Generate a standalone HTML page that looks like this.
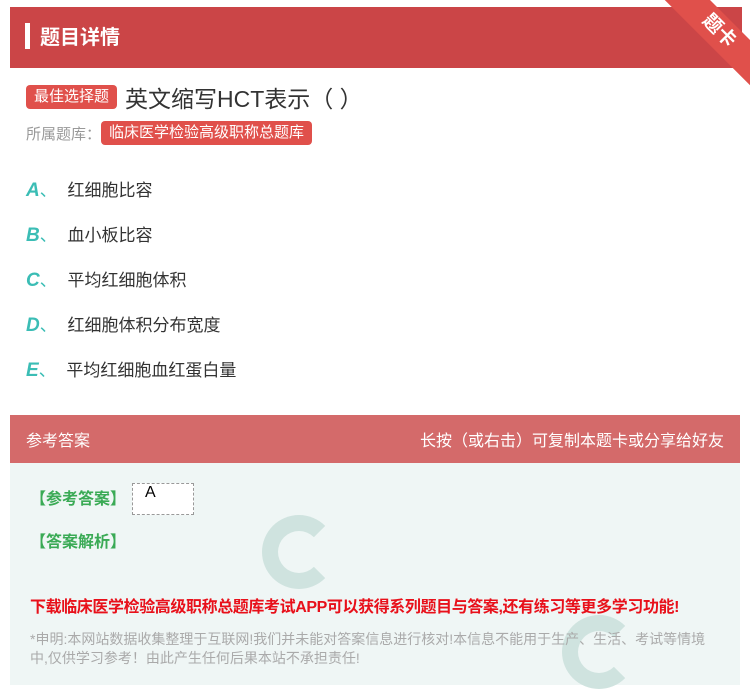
<!DOCTYPE html>
<html><head><meta charset="utf-8"><style>
*{margin:0;padding:0;box-sizing:border-box}
body{width:750px;height:685px;background:#fff;font-family:"Liberation Sans","Noto Sans CJK SC",sans-serif;position:relative;overflow:hidden}
.hdr{position:absolute;left:10px;top:7px;width:732px;height:61px;background:#cb4547}
.hdr .bar{position:absolute;left:15px;top:16px;width:5px;height:26px;background:#fff}
.hdr .t{position:absolute;left:30px;top:14px;color:#fff;font-size:20px;font-weight:bold}
.rib{position:absolute;width:130px;height:32px;background:#e0504b;transform:rotate(45deg);transform-origin:0 0;left:684px;top:-26px;color:#fff;font-size:19px;font-weight:bold;text-align:center;line-height:32px}
.q{position:absolute;left:26px;top:80px;font-size:23px;color:#333;display:flex;align-items:center}
.tag{background:#e0504b;color:#fff;font-size:15px;border-radius:4px;padding:0 8px;height:24px;line-height:24px;margin-right:8px}
.lib{position:absolute;left:26px;top:121px;font-size:15px;color:#999;display:flex;align-items:center}
.lib .tag{font-size:15px;margin-left:0}
.opt{position:absolute;left:26px;font-size:17px;color:#333}
.opt b{color:#3bbdb5;font-style:italic;font-size:19px;margin-right:0}
.opt i{font-style:normal;color:#3bbdb5;margin-right:6px}
.ans{position:absolute;left:10px;top:415px;width:730px;height:270px;background:#eff6f5}
.ah{height:48px;background:#d46a6a;color:#fff;font-size:16px;display:flex;justify-content:space-between;align-items:center;padding:0 16px}
.g{position:absolute;color:#3aaa55;font-size:16px;font-weight:bold}
.red{position:absolute;left:20px;top:178px;color:#e8101a;font-size:16px;font-weight:bold;letter-spacing:-0.4px;white-space:nowrap}
.note{position:absolute;left:20px;top:215px;width:680px;color:#aaa;font-size:14px;line-height:19px}
.ring{position:absolute;width:74px;height:74px;border-radius:50%;border:16px solid #cfe3df;border-right-color:transparent}
</style></head><body>
<div class="hdr"><div class="bar"></div><div class="t">题目详情</div></div>
<div class="rib">题卡</div>
<div class="q"><span class="tag">最佳选择题</span>英文缩写HCT表示（ ）</div>
<div class="lib">所属题库：<span class="tag">临床医学检验高级职称总题库</span></div>
<div class="opt" style="top:176px"><b>A</b><i>、</i> 红细胞比容</div>
<div class="opt" style="top:221px"><b>B</b><i>、</i> 血小板比容</div>
<div class="opt" style="top:266px"><b>C</b><i>、</i> 平均红细胞体积</div>
<div class="opt" style="top:311px"><b>D</b><i>、</i> 红细胞体积分布宽度</div>
<div class="opt" style="top:356px"><b>E</b><i>、</i> 平均红细胞血红蛋白量</div>
<div class="ans">
<div class="ah"><span>参考答案</span><span>长按（或右击）可复制本题卡或分享给好友</span></div>
<div class="ring" style="left:252px;top:100px"></div>
<div class="ring" style="left:552px;top:200px"></div>
<div class="g" style="left:20px;top:70px">【参考答案】</div>
<div style="position:absolute;left:122px;top:68px;width:62px;height:32px;background:#fff;border:1px dashed #999;font-size:16px;padding-left:12px">A</div>
<div class="g" style="left:20px;top:113px">【答案解析】</div>
<div class="red">下载临床医学检验高级职称总题库考试APP可以获得系列题目与答案,还有练习等更多学习功能!</div>
<div class="note">*申明:本网站数据收集整理于互联网!我们并未能对答案信息进行核对!本信息不能用于生产、生活、考试等情境中,仅供学习参考！由此产生任何后果本站不承担责任!</div>
</div>
</body></html>
